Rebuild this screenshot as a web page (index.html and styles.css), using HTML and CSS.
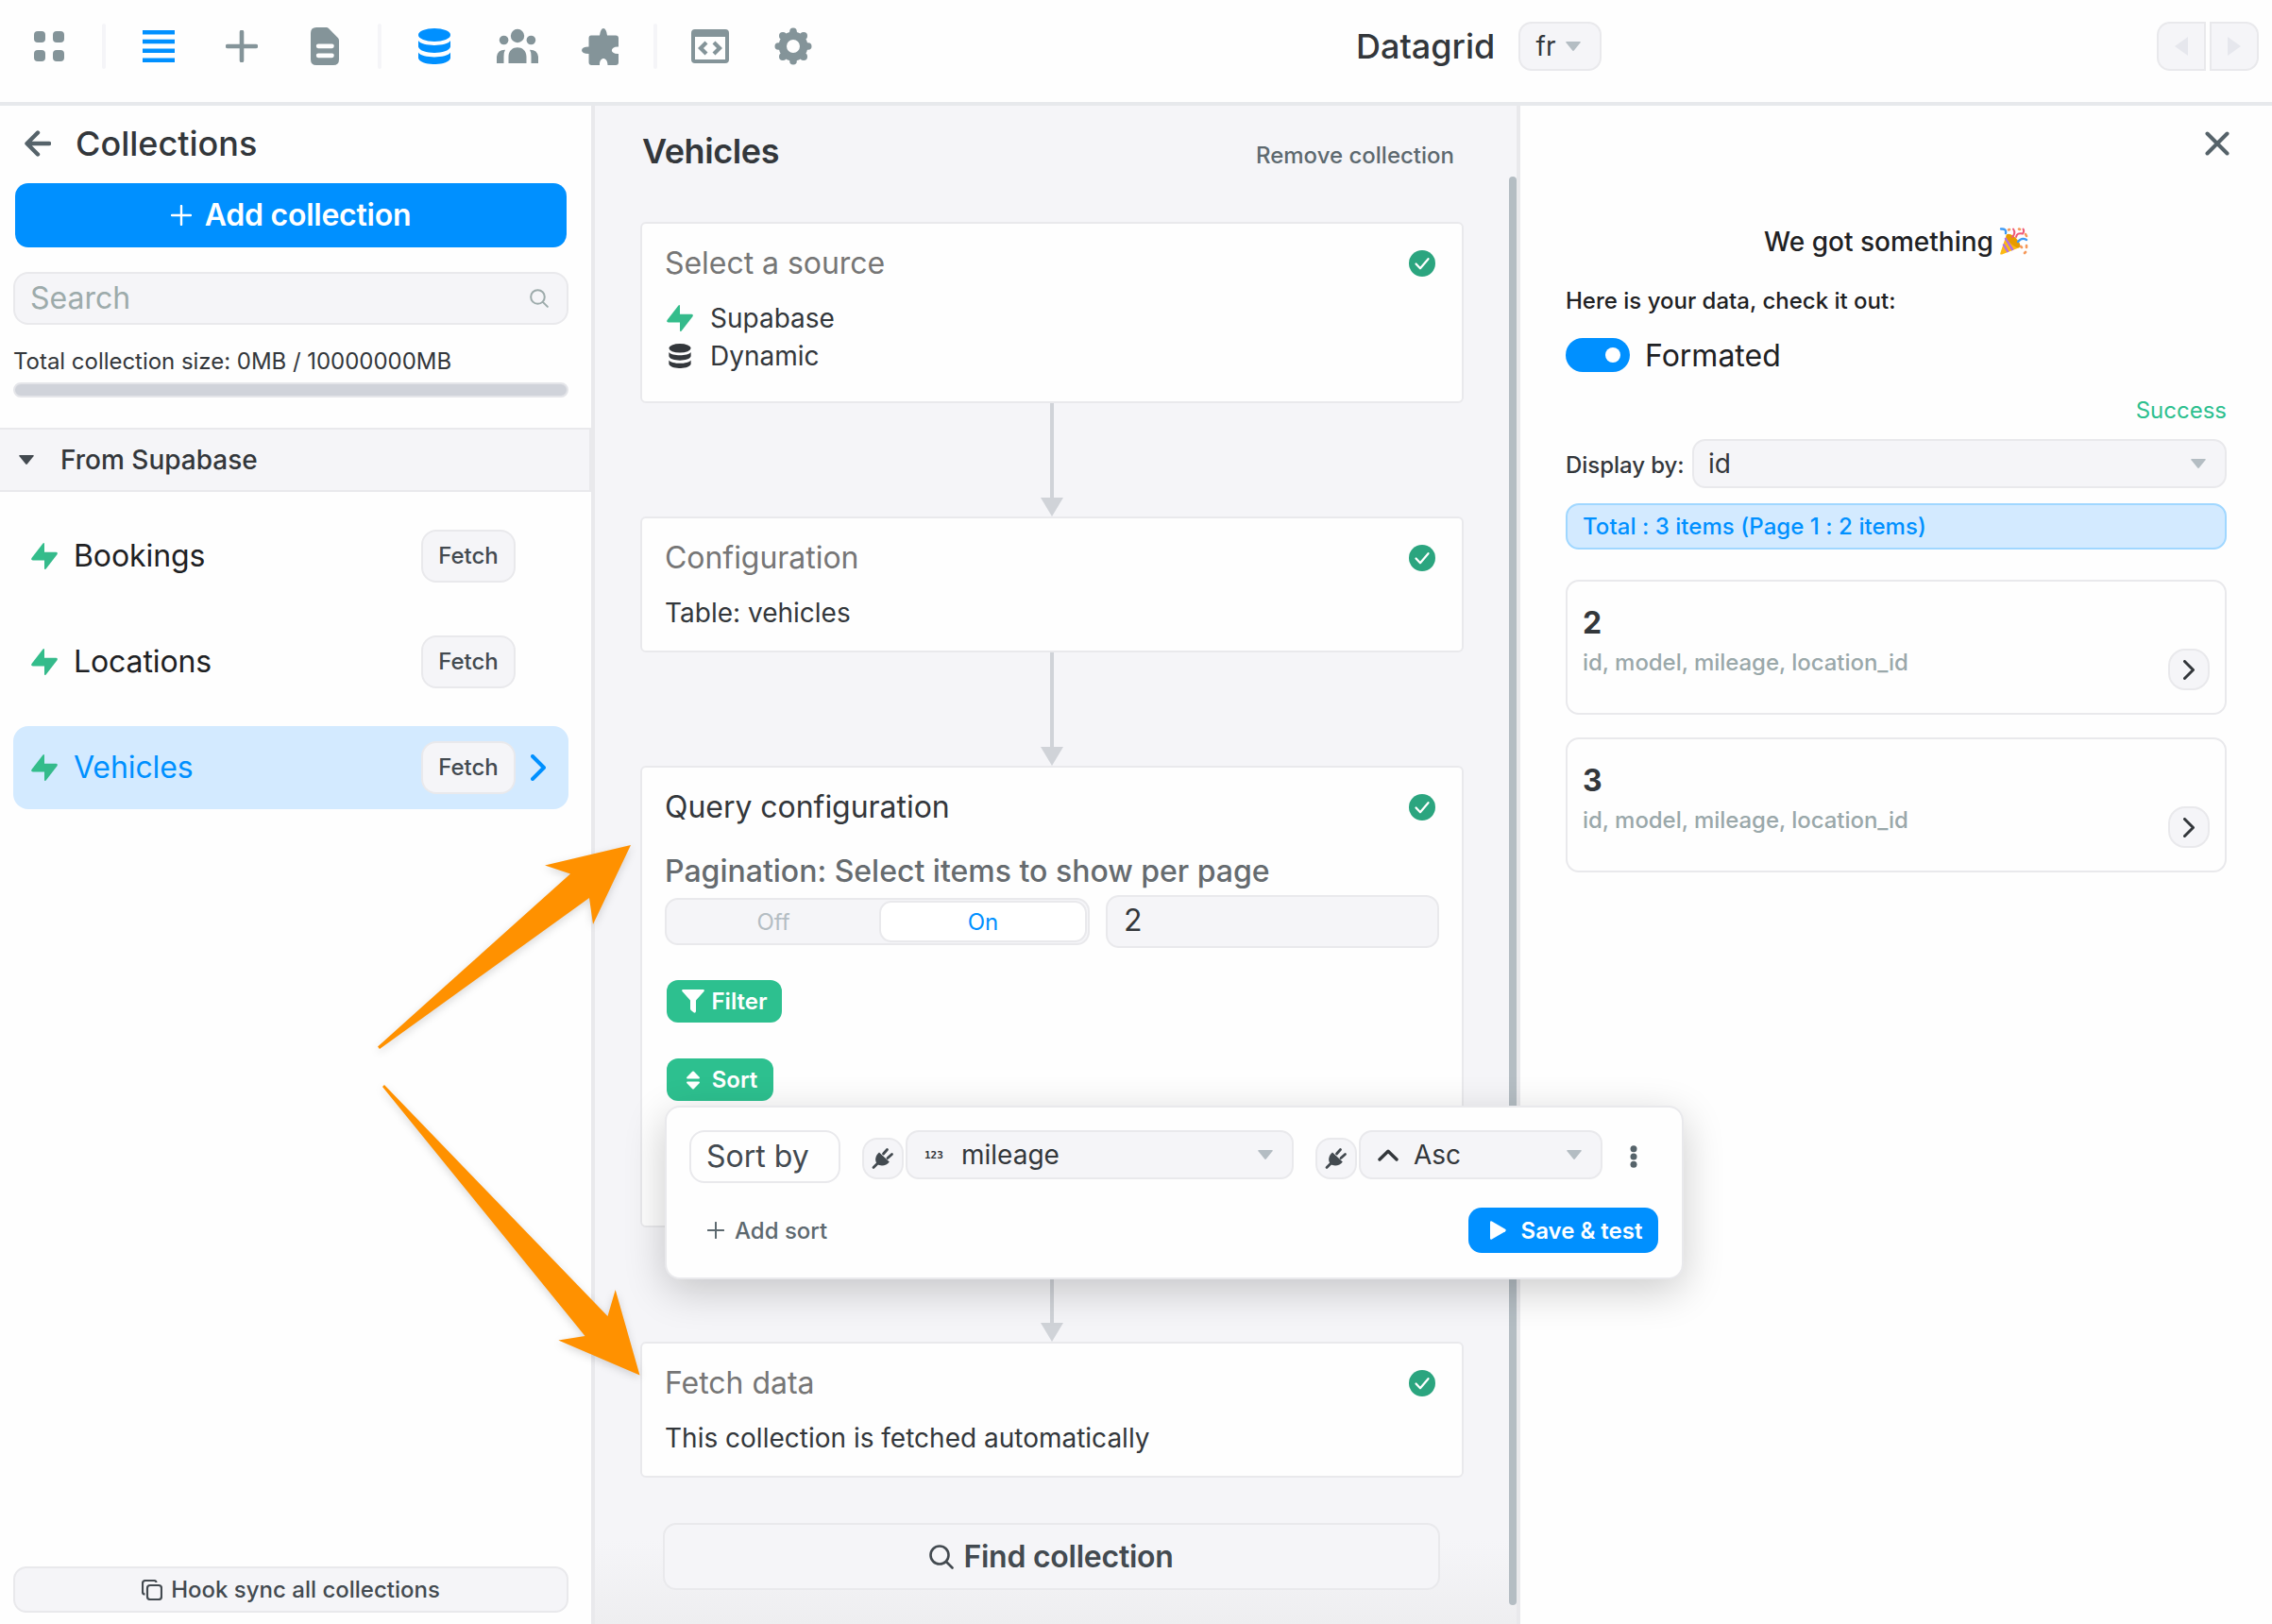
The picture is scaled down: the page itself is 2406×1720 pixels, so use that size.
FILE: index.html
```html
<!DOCTYPE html>
<html lang="en">
<head>
  <meta charset="UTF-8">
  <title>Datagrid</title>
  <link rel="stylesheet" href="styles.css">
</head>
<body>
  <!-- shared icons -->
  <svg class="sprite">
    <symbol id="bolt" viewBox="0 0 28 28">
      <path d="M15.7 27.4Q14 28.8 14 26.8V9.8H26.2Q28.8 10 27.3 12.4Z" fill="#35ba8b"/>
      <path d="M12.3 .7Q14 -.8 14 1.2V18.5H1.8Q-.8 18.3 .7 15.8Z" fill="#33bd8b"/>
    </symbol>
    <symbol id="check" viewBox="0 0 28 28">
      <circle cx="14" cy="14" r="14" fill="#2ba57f"/>
      <path d="M7.5 14.5L12 19.3L20.5 9.2" fill="none" stroke="#fff" stroke-width="2.2" stroke-linecap="round" stroke-linejoin="round"/>
    </symbol>
    <symbol id="db" viewBox="0 0 34 38">
      <ellipse cx="17" cy="7" rx="17" ry="7"/>
      <path d="M0 13C4 19.500 30 19.500 34 13V19.500C32 28 2 28 0 19.500ZM0 25.500C4 32 30 32 34 25.500V31.500C32 40.200 2 40.200 0 31.500Z"/>
    </symbol>
    <symbol id="caret" viewBox="0 0 16 10">
      <path d="M1.200 0H14.800Q16.500 0 15.500 1.300L9 9.300Q8 10.500 7 9.300L.5 1.300Q-.5 0 1.200 0Z"/>
    </symbol>
    <symbol id="chevron" viewBox="0 0 16 28">
      <path d="M2 2L14 14L2 26" fill="none" stroke="currentColor" stroke-width="4" stroke-linecap="round" stroke-linejoin="round"/>
    </symbol>
    <symbol id="search" viewBox="0 0 26 26">
      <path d="M18 18L24.500 24.500M20.500 11A9.500 9.500 0 1 1 1.500 11A9.500 9.500 0 0 1 20.500 11Z" fill="none" stroke="currentColor" stroke-width="2.600" stroke-linecap="round"/>
    </symbol>
    <symbol id="plug" viewBox="0 0 24 24">
      <path d="M2 21.500L7 16.500M12.500 7L16.500 2.500M17 11.500L21.500 7.500" stroke="currentColor" stroke-width="2.800" stroke-linecap="round"/>
      <path d="M8 5.500L18.800 15.500C16 19.500 9.500 21 5.800 17.500C2.500 13.500 4.500 8.500 8 5.500Z" fill="currentColor"/>
    </symbol>
    <symbol id="plus" viewBox="0 0 22 22">
      <path d="M11 1V21M1 11H21" stroke="currentColor" stroke-width="2.400" stroke-linecap="round"/>
    </symbol>
  </svg>

  <header class="topbar">
    <nav class="tools">
      <a class="tool">
        <svg width="32" height="32" viewBox="0 0 32 32"><rect width="12" height="12" rx="4"/><rect x="20" width="12" height="12" rx="4"/><rect y="20" width="12" height="12" rx="4"/><rect x="20" y="20" width="12" height="12" rx="4"/></svg>
      </a>
      <span class="separator"></span>
      <a class="tool active">
        <svg width="34" height="34" viewBox="0 0 34 34"><path d="M0 0H34V4.500H0ZM0 9.800H34V14.300H0ZM0 19.500H34V24H0ZM0 29.500H34V34H0Z"/></svg>
      </a>
      <a class="tool">
        <svg width="34" height="34" viewBox="0 0 34 34"><path d="M17 2V32M2 17H32" stroke="#849499" stroke-width="4.600" stroke-linecap="round"/></svg>
      </a>
      <a class="tool">
        <svg width="30" height="40" viewBox="0 0 30 40"><path fill-rule="evenodd" d="M6 0H16.500Q18 0 19.200 1.200L28.800 11Q30 12.200 30 14V34Q30 40 24 40H6Q0 40 0 34V6Q0 0 6 0ZM8 17.500Q5.800 17.500 5.800 19.800T8 22.200H22.500Q24.800 22.200 24.800 19.800T22.500 17.500ZM8 27.500Q5.800 27.500 5.800 29.800T8 32.200H22.500Q24.800 32.200 24.800 29.800T22.500 27.500Z"/></svg>
      </a>
      <span class="separator"></span>
      <a class="tool active"><svg width="34" height="38"><use href="#db"/></svg></a>
      <a class="tool">
        <svg width="44" height="38" viewBox="0 0 44 38"><circle cx="22" cy="8" r="7.200"/><circle cx="7.600" cy="12.500" r="4.800"/><circle cx="36.400" cy="12.500" r="4.800"/><path d="M12.500 37V30C12.500 17 31.500 17 31.500 30V37ZM0 37V30Q1 22.500 9 22.700Q7.500 25 7.500 30V37ZM44 37V30Q43 22.500 35 22.700Q36.500 25 36.500 30V37Z"/></svg>
      </a>
      <a class="tool">
        <svg width="40" height="39" viewBox="0 0 40 39"><path d="M10 7.500H19Q20 0 23 0T27 7.500H36Q39 7.500 39 10.500V19.500C29.500 19 29.500 27.500 39 27V36Q39 39 36 39H27.500C27.500 29.500 18.500 29.500 19 39H10.500Q7.500 39 7.500 36V27Q0 27 0 23.300T7.500 19.500V10.500Q7.500 7.500 10 7.500Z"/></svg>
      </a>
      <span class="separator"></span>
      <a class="tool">
        <svg width="40" height="36" viewBox="0 0 40 36"><path fill-rule="evenodd" d="M4 0H36Q40 0 40 4V32Q40 36 36 36H4Q0 36 0 32V4Q0 0 4 0ZM4 8V32H36V8Z"/><path d="M16 14L10 20L16 26M24 14L30 20L24 26" fill="none" stroke="#849499" stroke-width="4.200"/></svg>
      </a>
      <a class="tool">
        <svg width="40" height="40" viewBox="0 0 40 40"><circle cx="20" cy="20" r="11.200" fill="none" stroke="#849499" stroke-width="8.400"/><circle cx="20" cy="4.300" r="3.800"/><circle cx="20" cy="35.700" r="3.800"/><circle cx="4.300" cy="20" r="3.800"/><circle cx="35.700" cy="20" r="3.800"/><circle cx="9" cy="9" r="4"/><circle cx="31" cy="9" r="4"/><circle cx="9" cy="31" r="4"/><circle cx="31" cy="31" r="4"/></svg>
      </a>
    </nav>
    <div class="page-name">
      <h1>Datagrid</h1>
      <button class="lang">fr <svg class="caret"><use href="#caret"/></svg></button>
    </div>
    <div class="history">
      <button><svg width="14" height="20" viewBox="0 0 14 20"><path d="M14 0V20L0 10Z"/></svg></button>
      <button><svg width="14" height="20" viewBox="0 0 14 20"><path d="M0 0V20L14 10Z"/></svg></button>
    </div>
  </header>

  <main class="workspace">
    <aside class="sidebar">
      <div class="sidebar-title">
        <svg width="28" height="28" viewBox="0 0 28 28"><path d="M14 2.500L2.500 14L14 25.500M3 14H26" fill="none" stroke="#56636a" stroke-width="4.400" stroke-linecap="round" stroke-linejoin="round"/></svg>
        <h2>Collections</h2>
      </div>
      <button class="add-collection"><svg width="22" height="22"><use href="#plus"/></svg>Add collection</button>
      <div class="search"><span>Search</span><svg width="20" height="20"><use href="#search"/></svg></div>
      <p class="size">Total collection size: 0MB / 10000000MB</p>
      <div class="size-bar"></div>
      <div class="group"><svg class="caret"><use href="#caret"/></svg>From Supabase</div>
      <ul class="collections">
        <li><svg class="bolt"><use href="#bolt"/></svg><span>Bookings</span><button class="fetch">Fetch</button></li>
        <li><svg class="bolt"><use href="#bolt"/></svg><span>Locations</span><button class="fetch">Fetch</button></li>
        <li class="selected"><svg class="bolt"><use href="#bolt"/></svg><span>Vehicles</span><button class="fetch">Fetch</button><svg class="chevron"><use href="#chevron"/></svg></li>
      </ul>
      <button class="hook-sync">
        <svg width="22" height="22" viewBox="0 0 22 22" fill="none" stroke="#434a50" stroke-width="2.200"><rect x="6" y="6" width="15" height="15" rx="3"/><path d="M3.500 15.500Q1 15.500 1 13V4Q1 1 4 1H13Q15.500 1 15.500 3"/></svg>
        Hook sync all collections
      </button>
    </aside>

    <section class="flow">
      <div class="flow-head">
        <h2>Vehicles</h2>
        <a>Remove collection</a>
      </div>

      <div class="card source">
        <h3>Select a source</h3><svg class="check"><use href="#check"/></svg>
        <p><svg class="bolt"><use href="#bolt"/></svg>Supabase</p>
        <p><svg class="db"><use href="#db"/></svg>Dynamic</p>
      </div>
      <div class="connector"></div>

      <div class="card">
        <h3>Configuration</h3><svg class="check"><use href="#check"/></svg>
        <p>Table: vehicles</p>
      </div>
      <div class="connector"></div>

      <div class="card query">
        <h3>Query configuration</h3><svg class="check"><use href="#check"/></svg>
        <h4>Pagination: Select items to show per page</h4>
        <div class="pagination">
          <div class="switch"><span>Off</span><span class="on">On</span></div>
          <div class="per-page">2</div>
        </div>
        <button class="tag filter"><svg width="24" height="25" viewBox="0 0 24 25"><path d="M1 0H23Q24.500 .5 23.500 2L15 11.500V23Q14.500 25.500 12.500 24.200L9.800 22Q9 21.300 9 20V11.500L.5 2Q-.5 .5 1 0Z" fill="#fff"/></svg>Filter</button>
        <button class="tag sort"><svg width="14" height="20" viewBox="0 0 14 20"><path d="M6.200 .8Q7 0 7.800 .8L13.600 6.800Q14.500 8.500 13 8.500H1Q-.5 8.500 .4 6.800ZM6.200 19.200Q7 20 7.800 19.200L13.600 13.200Q14.500 11.500 13 11.500H1Q-.5 11.500 .4 13.200Z" fill="#fff"/></svg>Sort</button>

        <div class="sort-menu">
          <div class="sort-row">
            <div class="sort-by">Sort by</div>
            <button class="plug"><svg width="24" height="24"><use href="#plug"/></svg></button>
            <div class="select column"><span class="type">123</span>mileage<svg class="caret"><use href="#caret"/></svg></div>
            <button class="plug second"><svg width="24" height="24"><use href="#plug"/></svg></button>
            <div class="select order"><svg width="22" height="13" viewBox="0 0 22 13"><path d="M2 11L11 2.200L20 11" fill="none" stroke="#33373b" stroke-width="3.400" stroke-linecap="round" stroke-linejoin="round"/></svg>Asc<svg class="caret"><use href="#caret"/></svg></div>
            <svg class="dots" width="8" height="24" viewBox="0 0 8 24"><circle cx="4" cy="3.700" r="3.500"/><circle cx="4" cy="12" r="3.500"/><circle cx="4" cy="20.300" r="3.500"/></svg>
          </div>
          <div class="sort-actions">
            <a><svg width="18" height="18"><use href="#plus"/></svg>Add sort</a>
            <button class="save"><svg width="17" height="20" viewBox="0 0 17 20"><path d="M0 1.200Q.3 -.3 1.800 .4L16 8.800Q17.500 10 16 11.200L1.800 19.600Q.3 20.300 0 18.800Z" fill="#fff"/></svg>Save &amp; test</button>
          </div>
        </div>
      </div>
      <div class="connector long"></div>

      <div class="card">
        <h3>Fetch data</h3><svg class="check"><use href="#check"/></svg>
        <p>This collection is fetched automatically</p>
      </div>
      <button class="find"><svg width="26" height="26"><use href="#search"/></svg>Find collection</button>
      <div class="scrollbar"></div>
    </section>

    <section class="result">
      <svg class="close" width="26" height="26" viewBox="0 0 26 26"><path d="M2.500 2.500L23.500 23.500M23.500 2.500L2.500 23.500" stroke="#56636a" stroke-width="4" stroke-linecap="round"/></svg>
      <h3>We got something<svg width="31" height="30" viewBox="0 0 31 30">
        <path d="M8 7L22 21L3 28.500Q.5 29 1.500 26.500Z" fill="#fcb913"/>
        <path d="M6.500 11L14.500 24M4.500 17.500L9.500 26" stroke="#b46fe0" stroke-width="2.400"/>
        <ellipse cx="15" cy="14" rx="4" ry="9.500" transform="rotate(-45 15 14)" fill="#e79a00"/>
        <path d="M2 1.500Q8 1 7 6M20 15Q24 10 29 13" fill="none" stroke="#3f9bf5" stroke-width="2.400" stroke-linecap="round"/>
        <path d="M14 10Q18 6 15 1.500M18 10Q19 5 25 6.500Q27 4 25.500 1.500" fill="none" stroke="#ef5a78" stroke-width="2" stroke-linecap="round"/>
        <path d="M10 2.500L11 2M28 7L29 9M23 20L24 21M29 19V21M21 1.500L22 2M27 27L28 26" stroke="#f59a5c" stroke-width="2.600" stroke-linecap="round"/>
      </svg></h3>
      <p class="hint">Here is your data, check it out:</p>
      <div class="formated"><span class="toggle"></span>Formated</div>
      <p class="status">Success</p>
      <div class="display-by">
        <label>Display by:</label>
        <div class="select">id<svg class="caret"><use href="#caret"/></svg></div>
      </div>
      <div class="total">Total : 3 items (Page 1 : 2 items)</div>
      <div class="item">
        <div><strong>2</strong><small>id, model, mileage, location_id</small></div>
        <button><svg class="chevron"><use href="#chevron"/></svg></button>
      </div>
      <div class="item">
        <div><strong>3</strong><small>id, model, mileage, location_id</small></div>
        <button><svg class="chevron"><use href="#chevron"/></svg></button>
      </div>
    </section>
  </main>

  <!-- annotation arrows drawn over the page -->
  <svg class="arrows" width="300" height="600" viewBox="390 870 300 600">
    <path d="M400 1108.500L604 925.500L577 916.500L668 895L628 979L624 951L402 1111Z"/>
    <path d="M407 1149L643.500 1394L651.700 1366L677.500 1456.500L591.300 1419.500L619.500 1415L405 1151Z"/>
  </svg>
</body>
</html>
```
FILE: styles.css
```css
* {
  box-sizing: border-box;
  margin: 0;
  padding: 0;
}
body {
  width: 2406px;
  height: 1720px;
  overflow: hidden;
  background: #fefefe;
  color: #33373b;
  font-family: Inter, "Liberation Sans", sans-serif;
  font-size: 24px;
  font-weight: 500;
  display: flex;
  flex-direction: column;
}
button {
  font: inherit;
  color: inherit;
  border: none;
  display: flex;
  align-items: center;
  justify-content: center;
}
svg {
  flex: none;
}
.sprite {
  position: absolute;
  width: 0;
  height: 0;
}
.caret {
  width: 16px;
  height: 10px;
  fill: #b4bdc3;
}
.bolt {
  width: 28px;
  height: 28px;
}

/* top bar */
.topbar {
  height: 112px;
  flex: none;
  display: flex;
  align-items: center;
  padding: 0 14px 10px 8px;
  border-bottom: 4px solid #e7e9ec;
}
.tools {
  display: flex;
  align-items: center;
}
.tool {
  width: 88px;
  display: flex;
  justify-content: center;
  fill: #849499;
}
.tool.active {
  fill: #0090ff;
}
.separator {
  width: 4px;
  height: 48px;
  margin: 0 12px;
  border-radius: 2px;
  background: #f5f5f8;
}
.page-name {
  display: flex;
  align-items: center;
  margin-left: 552px;
}
h1, h2 {
  font-size: 36px;
  font-weight: 500;
  line-height: 44px;
}
h1 {
  width: 172px;
}
.lang {
  width: 88px;
  height: 52px;
  gap: 11px;
  padding-right: 3px;
  font-size: 28px;
  font-weight: 400;
  background: #f5f5f8;
  border: 2px solid #e9e9ec;
  border-radius: 14px;
}
.history {
  display: flex;
  gap: 4px;
  margin-left: auto;
}
.history button {
  width: 52px;
  height: 52px;
  background: #f5f5f8;
  border: 2px solid #e9e9ec;
  border-radius: 14px 0 0 14px;
  fill: #e6e7ed;
}
.history button + button {
  border-radius: 0 14px 14px 0;
}

.workspace {
  flex: 1;
  display: flex;
  min-height: 0;
}

/* sidebar */
.sidebar {
  width: 630px;
  flex: none;
  display: flex;
  flex-direction: column;
  border-right: 4px solid #e9e9ec;
  padding-bottom: 12px;
}
.sidebar-title {
  display: flex;
  align-items: center;
  gap: 26px;
  padding: 18px 26px 20px;
}
.add-collection {
  height: 68px;
  margin: 0 26px 0 16px;
  padding-bottom: 1px;
  gap: 14px;
  background: #0090ff;
  border-radius: 14px;
  color: #fff;
  font-size: 32px;
  font-weight: 600;
  letter-spacing: -0.25px;
}
.search {
  height: 56px;
  margin: 26px 24px 0 14px;
  padding: 0 19px 1px 16px;
  display: flex;
  align-items: center;
  justify-content: space-between;
  background: #f5f5f8;
  border: 2px solid #e9e9ec;
  border-radius: 16px;
  color: #9dabab;
  font-size: 32px;
  font-weight: 400;
}
.size {
  margin: 23px 14px 7px;
  line-height: 31px;
  font-weight: 400;
  letter-spacing: -0.03px;
}
.size-bar {
  height: 16px;
  margin: 0 24px 32px 14px;
  background: #d0d3da;
  border: 2px solid #e4e5e9;
  border-radius: 8px;
}
.group {
  height: 68px;
  display: flex;
  align-items: center;
  gap: 28px;
  padding-left: 20px;
  background: #f5f5f8;
  border: 2px solid #e9e9ec;
  border-left: none;
  font-size: 28px;
}
.group .caret {
  fill: #434a50;
}
.collections {
  list-style: none;
  display: flex;
  flex-direction: column;
  gap: 24px;
  margin: 24px 24px 0 14px;
}
.collections li {
  height: 88px;
  display: flex;
  align-items: center;
  padding: 0 0 1px 19px;
  border-radius: 16px;
  color: #1e2123;
  font-size: 32px;
  font-weight: 400;
}
.collections .selected {
  background: #d3eaff;
  color: #0090ff;
}
.collections span {
  width: 368px;
  margin-left: 17px;
  letter-spacing: -0.1px;
}
.fetch {
  width: 100px;
  height: 56px;
  background: #f5f5f8;
  border: 2px solid #e9e9ec;
  border-radius: 16px;
  color: #434a50;
  font-size: 24px;
  font-weight: 500;
}
.collections .chevron {
  width: 16px;
  height: 28px;
  margin-left: 16px;
}
.hook-sync {
  height: 49px;
  margin: auto 24px 0 14px;
  gap: 9px;
  background: #f5f5f8;
  border: 2px solid #e9e9ec;
  border-radius: 14px;
  color: #434a50;
}

/* collection flow */
.flow {
  position: relative;
  width: 980px;
  flex: none;
  padding: 26px 57px 0 48px;
  background: linear-gradient(#f5f5f8 1520px, #eeeef0);
  border-right: 4px solid #e9e9ec;
}
.flow-head {
  display: flex;
  align-items: center;
  justify-content: space-between;
  height: 97px;
  padding: 0 9px 53px 2px;
}
.flow-head a {
  color: #5d696f;
  padding-top: 8px;
}
.flow-head h2 {
  font-weight: 600;
  letter-spacing: -0.4px;
}
.card {
  position: relative;
  display: grid;
  grid-template-columns: 1fr 28px;
  align-items: center;
  align-content: start;
  width: 872px;
  min-height: 144px;
  padding: 22px 28px 20px 24px;
  background: #fefefe;
  border: 2px solid #e9e9ec;
  border-radius: 6px;
}
.card h3 {
  color: #767676;
  font-size: 32px;
  font-weight: 400;
  line-height: 40px;
  letter-spacing: -0.04px;
}
.check {
  width: 28px;
  height: 28px;
}
.card p {
  grid-column: 1 / 3;
  display: flex;
  align-items: center;
  height: 40px;
  margin-top: 18px;
  font-size: 28px;
  font-weight: 400;
}
.source {
  height: 192px;
}
.source p {
  gap: 18px;
  margin-left: 2px;
}
.source p + p {
  margin-top: 0;
}
.db {
  width: 24px;
  height: 26px;
  margin: 0 2px;
  fill: #33373b;
}
.connector {
  height: 120px;
  display: flex;
  flex-direction: column;
  align-items: center;
}
.connector.long {
  height: 121px;
}
.connector::before {
  content: "";
  width: 4px;
  flex: 1;
  background: #d0d3d8;
}
.connector::after {
  content: "";
  border: 12px solid transparent;
  border-top: 20px solid #d0d3d8;
  border-bottom: none;
}
.query {
  height: 489px;
  justify-items: start;
}
.query h3 {
  color: #33373b;
}
.query h4 {
  grid-column: 1 / 3;
  margin-top: 27px;
  color: #666b6f;
  font-size: 32px;
  font-weight: 500;
  line-height: 42px;
}
.pagination {
  grid-column: 1 / 3;
  display: flex;
  align-items: center;
  gap: 17px;
  margin: 4px 0 34px;
}
.switch {
  width: 450px;
  height: 50px;
  display: flex;
  padding: 1px;
  background: #f5f5f8;
  border: 2px solid #e9e9ec;
  border-radius: 14px;
  color: #b4bdc3;
  font-weight: 400;
}
.switch span {
  flex: 1;
  display: flex;
  align-items: center;
  justify-content: center;
}
.switch .on {
  flex: none;
  width: 220px;
  background: #fff;
  border: 2px solid #e9e9ec;
  border-radius: 13px;
  color: #0090ff;
}
.per-page {
  width: 353px;
  height: 56px;
  padding-left: 17px;
  background: #f5f5f8;
  border: 2px solid #e9e9ec;
  border-radius: 14px;
  font-size: 32px;
  font-weight: 400;
  line-height: 50px;
}
.tag {
  grid-column: 1 / 3;
  height: 45px;
  margin-left: 2px;
  background: #2dc08f;
  border-radius: 12px;
  color: #fff;
  font-weight: 600;
}
.filter {
  width: 122px;
  gap: 8px;
}
.sort {
  width: 113px;
  gap: 13px;
  margin-top: 38px;
  padding-left: 4px;
}

/* sort popup */
.sort-menu {
  position: absolute;
  z-index: 2;
  left: 24px;
  top: 358px;
  width: 1079px;
  height: 184px;
  padding: 24px 25px 24px 24px;
  background: #fefefe;
  border: 2px solid #e9e9ec;
  border-radius: 16px;
  box-shadow: 0 12px 44px rgba(0, 0, 0, 0.2);
}
.sort-row {
  display: flex;
  align-items: flex-start;
}
.sort-by {
  width: 160px;
  height: 56px;
  margin-right: 23px;
  padding-left: 16px;
  border: 2px solid #e9e9ec;
  border-radius: 16px;
  color: #434a50;
  font-size: 32px;
  font-weight: 400;
  line-height: 51px;
}
.plug {
  width: 44px;
  height: 44px;
  margin: 8px 2px 0 0;
  background: #f5f5f8;
  border: 2px solid #e9e9ec;
  border-radius: 16px;
  color: #434a50;
}
.plug.second {
  margin-left: 23px;
}
.select {
  height: 52px;
  display: flex;
  align-items: center;
  padding: 0 20px 0 18px;
  background: #f5f5f8;
  border: 2px solid #e9e9ec;
  border-radius: 14px;
  font-size: 28px;
  font-weight: 400;
}
.select .caret {
  margin-left: auto;
}
.column {
  width: 411px;
}
.type {
  width: 39px;
  font-family: "DejaVu Sans Mono", monospace;
  font-size: 11px;
  font-weight: 700;
}
.order {
  width: 258px;
}
.order svg:first-child {
  margin-right: 16px;
}
.dots {
  margin: 16px 0 0 29px;
  fill: #56636a;
}
.sort-actions {
  display: flex;
  align-items: center;
  justify-content: space-between;
  margin-top: 26px;
  padding: 0 0 0 19px;
}
.sort-actions a {
  display: flex;
  align-items: center;
  gap: 11px;
  color: #5d696f;
}
.save {
  width: 201px;
  height: 48px;
  gap: 16px;
  padding-left: 6px;
  background: #0090ff;
  border-radius: 14px;
  color: #fff;
  font-weight: 600;
}
.find {
  width: 823px;
  height: 71px;
  margin: 48px 0 0 24px;
  gap: 10px;
  background: #f5f5f8;
  border: 2px solid #e9e9ec;
  border-radius: 14px;
  color: #434a50;
  font-size: 32px;
  font-weight: 600;
  letter-spacing: -0.25px;
}
.scrollbar {
  position: absolute;
  right: 0;
  top: 75px;
  width: 8px;
  height: 1513px;
  border-radius: 4px;
  background: #b4bdc3;
}

/* result panel */
.result {
  flex: 1;
  display: flex;
  flex-direction: column;
  padding: 27px 48px 0;
}
.close {
  align-self: flex-end;
  margin-right: -3px;
}
.result h3 {
  display: flex;
  align-items: center;
  justify-content: center;
  gap: 6px;
  height: 36px;
  margin-top: 73px;
  color: #1e2123;
  font-size: 28px;
  font-weight: 500;
}
.hint {
  height: 30px;
  margin-top: 30px;
  color: #1e2123;
  line-height: 30px;
}
.formated {
  display: flex;
  align-items: center;
  gap: 16px;
  height: 40px;
  margin-top: 22px;
  color: #1e2123;
  font-size: 32px;
  font-weight: 400;
}
.toggle {
  width: 68px;
  height: 36px;
  display: flex;
  align-items: center;
  justify-content: flex-end;
  padding-right: 10px;
  background: #0090ff;
  border-radius: 18px;
}
.toggle::after {
  content: "";
  width: 16px;
  height: 16px;
  border-radius: 50%;
  background: #fff;
}
.status {
  height: 30px;
  margin: 24px 0 15px;
  color: #2dc08f;
  font-weight: 400;
  line-height: 30px;
  text-align: right;
}
.display-by {
  display: flex;
  align-items: center;
}
.display-by label {
  width: 134px;
  padding-top: 2px;
  letter-spacing: -0.05px;
}
.display-by .select {
  flex: 1;
  padding-left: 15px;
}
.total {
  height: 49px;
  margin: 16px 0 32px;
  padding-left: 16px;
  background: #d3eaff;
  border: 2px solid #a0d7ff;
  border-radius: 14px;
  color: #0090ff;
  line-height: 45px;
  letter-spacing: 0.05px;
}
.item {
  display: flex;
  align-items: flex-end;
  justify-content: space-between;
  height: 143px;
  margin-bottom: 24px;
  padding: 0 16px 24px;
  border: 2px solid #e9e9ec;
  border-radius: 14px;
}
.item strong, .item small {
  display: block;
}
.item strong {
  font-size: 32px;
  font-weight: 700;
  line-height: 40px;
}
.item small {
  margin: 7px 0 14px;
  color: #9aa8aa;
  font-size: 24px;
  line-height: 30px;
  letter-spacing: -0.05px;
}
.item button {
  width: 44px;
  height: 44px;
  background: #f5f5f8;
  border: 2px solid #e9e9ec;
  border-radius: 18px;
}
.item .chevron {
  width: 12px;
  height: 21px;
}

.arrows {
  position: absolute;
  left: 390px;
  top: 870px;
  fill: #ff9100;
  filter: drop-shadow(0 3px 4px rgba(0, 0, 0, 0.15));
}
```
